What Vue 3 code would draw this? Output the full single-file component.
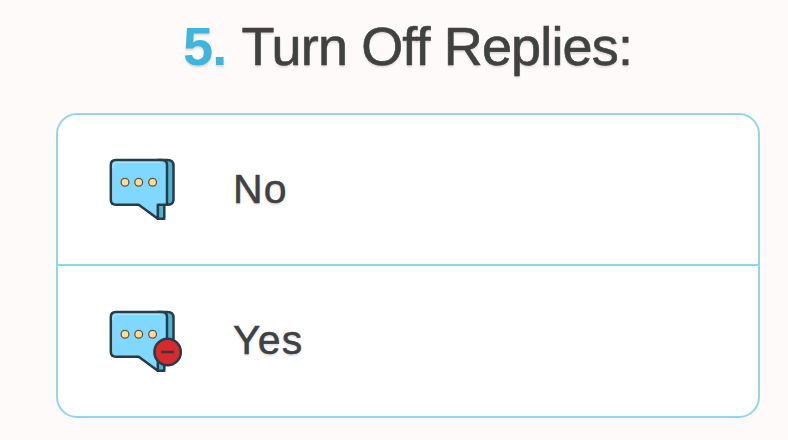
<script setup>
const options = [
  { label: 'No', muted: false },
  { label: 'Yes', muted: true },
]
</script>

<template>
  <main class="page">
    <h1 class="title"><span class="number">5.</span> <span class="text">Turn Off Replies:</span></h1>
    <ul class="options">
      <li v-for="option in options" :key="option.label" class="option">
        <svg class="icon" viewBox="0 0 76 66" width="76" height="66">
          <g stroke="#2b3b43" stroke-width="2.5" stroke-linejoin="round">
            <path fill="#4ab4d8" d="M50 4.100H59.500Q65.500 4.100 65.500 9.800V43.200Q65.500 48.700 60 48.700H56.300V62.800H49.800Z" />
            <path fill="#80d8ff" d="M7.900 4.100H54Q59 4.100 59 9.100V48.700H49.800V62.800L30.700 48.700H7.900Q2.800 48.700 2.800 43.700V9.100Q2.800 4.100 7.900 4.100Z" />
          </g>
          <path d="M5 12V9.800Q5 6.300 8.700 6.300H52" fill="none" stroke="#b8eaff" stroke-width="1" stroke-linecap="round" />
          <g fill="#ffe097" stroke="#714c43" stroke-width="1.300">
            <circle cx="17" cy="26.300" r="3.900" />
            <circle cx="30.700" cy="26.300" r="3.900" />
            <circle cx="44.600" cy="26.300" r="3.900" />
          </g>
          <g v-if="option.muted" stroke="#2b3b43" stroke-width="2.500">
            <circle cx="59.600" cy="44" r="13.200" fill="#d82a2c" />
            <path d="M53.300 44H65.900" />
          </g>
        </svg>
        <span class="label">{{ option.label }}</span>
      </li>
    </ul>
  </main>
</template>

<style>
body {
  margin: 0;
  background: #fefaf9;
}
</style>

<style scoped>
.page {
  box-sizing: border-box;
  height: 440px;
  padding: 16px 28px 22px 56px;
  overflow: hidden;
  font-family: "Liberation Sans", Arial, sans-serif;
  color: #404141;
}
.title {
  margin: 0 0 37px;
  height: 60px;
  padding-left: 127px;
  font-size: 54px;
  font-weight: 400;
  line-height: 60px;
  letter-spacing: -0.86px;
  white-space: nowrap;
  text-shadow: 0 2px 2px rgba(0, 0, 0, 0.13);
}
.text {
  margin-left: 1px;
  -webkit-text-stroke: 0.6px #404141;
}
.number {
  color: #3eb5dc;
  font-weight: 700;
}
.options {
  box-sizing: border-box;
  height: 305px;
  margin: 0;
  padding: 0;
  list-style: none;
  overflow: hidden;
  background: #fff;
  border: 2px solid #92d6e8;
  border-radius: 21px;
}
.option {
  box-sizing: border-box;
  display: flex;
  align-items: center;
  height: 149px;
  padding: 0 0 1px 50px;
}
.option + .option {
  height: 152px;
  padding-bottom: 0;
  border-top: 2px solid #92d6e8;
}
.icon {
  flex: none;
}
.label {
  margin-left: 49px;
  padding-top: 1px;
  font-size: 41px;
  letter-spacing: 1.2px;
  -webkit-text-stroke: 0.5px #404141;
  text-shadow: 0 2px 2px rgba(0, 0, 0, 0.13);
}
.option + .option .label {
  padding: 0 0 1px;
}
</style>
